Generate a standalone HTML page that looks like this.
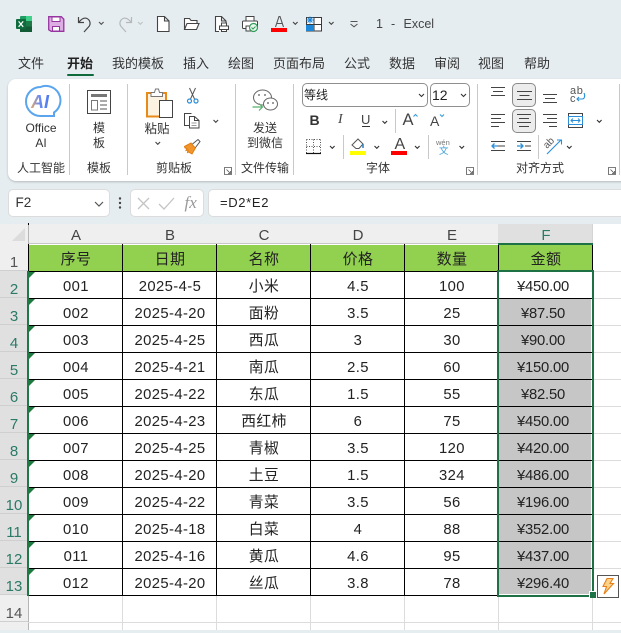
<!DOCTYPE html>
<html lang="zh"><head><meta charset="utf-8"><title>1 - Excel</title>
<style>
html,body{margin:0;padding:0}
body{width:621px;height:630px;overflow:hidden;position:relative;background:#e6edf1;font-family:"Liberation Sans","Noto Sans CJK SC",sans-serif;color:#222}
div,svg{position:absolute}
.t{white-space:nowrap;line-height:16px}
.c{text-align:center}
.tab{top:56px;font-size:13px;height:16px;line-height:16px;color:#333;white-space:nowrap}
.r{font-size:12px;color:#333}
.sep{width:1px;background:#c9c9c9}
#ribbon{left:8px;top:79px;width:640px;height:102px;background:#fff;border-radius:8px;box-shadow:0 1px 2px rgba(0,0,0,.22)}
.ch{top:224px;height:20px;line-height:23px;text-align:center;font-size:15px;color:#444;background:#efefef;border-right:1px solid #d4d4d4;box-sizing:border-box;width:95px;padding-left:2px}
.rh{left:0;width:28px;text-align:center;font-size:15px;color:#555;background:#efefef;border-bottom:1px solid #cfcfcf;box-sizing:border-box;height:27px;line-height:38px}
.rs{background:#e0e0e0;color:#2a7a66;left:0;width:28px}
.gv{top:244px;width:1px;height:386px;background:#dcdcdc}
.gh{left:28px;width:593px;height:1px;background:#dcdcdc}
.row{left:28px;width:564px;height:27px}
.row span{position:absolute;top:0;width:94px;text-align:center;font-size:14.8px;line-height:32px;color:#222;letter-spacing:.4px;white-space:nowrap}
.row span:nth-child(1){left:1px}.row span:nth-child(2){left:95px}.row span:nth-child(3){left:189px}.row span:nth-child(4){left:283px}.row span:nth-child(5){left:377px}.row span:nth-child(6){left:468px;letter-spacing:-.2px}
.hd span{line-height:31px;letter-spacing:.4px;font-size:15px}
.row.hd span:nth-child(6){left:471px;letter-spacing:.4px}
.gr{width:0;height:0;left:29px;border-top:6px solid #1e7a3c;border-right:6px solid transparent}
</style></head><body>

<!-- title bar icons -->
<svg style="left:0;top:0" width="621" height="50" viewBox="0 0 621 50" fill="none">
<rect x="20" y="16" width="12" height="16" rx="1" fill="#1f9d62"/><rect x="26" y="16" width="6" height="5" fill="#3fd08a"/><rect x="26" y="21" width="6" height="5.500" fill="#1d7a48"/><rect x="20" y="26.500" width="12" height="5.500" fill="#115c35"/>
<rect x="16" y="19" width="10" height="10" rx="1" fill="#0e6c3c"/>
<path d="M18.600 21.400l4.600 5.400M23.200 21.400l-4.600 5.400" stroke="#fff" stroke-width="1.200"/>
<path d="M48.700 16.700h12.600l2.500 2.500v12.100h-12.600l-2.500-1.500z" fill="#dcaee4" stroke="#96359f" stroke-width="1.300"/>
<rect x="52" y="17" width="8" height="4.500" fill="#fff" stroke="#96359f" stroke-width="1"/><rect x="52.500" y="26.500" width="7" height="4.500" fill="#fff" stroke="#96359f" stroke-width="1"/>
<path d="M78.500 17v5.500h5.500M79 22c3-3.500 6-4.500 8-3.500 3.500 1.800 4 6 1.500 8.500l-4.500 5" stroke="#444" stroke-width="1.200"/>
<path d="M99 22l2.300 2.300 2.300-2.300" stroke="#555" stroke-width="1.200"/>
<path d="M131.500 17v5.500h-5.500M131 22c-3-3.500-6-4.500-8-3.500-3.500 1.800-4 6-1.500 8.500l4.500 5" stroke="#b4b8ba" stroke-width="1.200"/>
<path d="M138 22l2.300 2.300 2.300-2.300" stroke="#c0c4c6" stroke-width="1.200"/>
<path d="M157.500 16.500h7l4.500 4.500v10.500h-11.500zM164.500 16.500v4.500h4.500" fill="#fff" stroke="#444" stroke-width="1.100"/>
<path d="M184.500 29.500v-11h5l1.500 2h6v3M184.500 29.500l2.500-6h12l-2.500 6z" stroke="#444" stroke-width="1.100" fill="#fff"/>
<path d="M219 31.500h-3.500v-15h6l4.500 4.500v3M221.500 16.500v4.500h4.500" stroke="#444" stroke-width="1.100" fill="#fff"/>
<rect x="219.500" y="26" width="9" height="3.500" fill="#fff" stroke="#444"/><rect x="221.500" y="23" width="5" height="3" fill="#fff" stroke="#444"/><rect x="221.500" y="29.500" width="5" height="2" fill="#fff" stroke="#444"/>
<rect x="246" y="16.500" width="8" height="4.500" fill="#fff" stroke="#444"/><rect x="242.500" y="21" width="15" height="7.500" rx="1" fill="#fff" stroke="#444"/><rect x="246" y="26" width="5" height="5" fill="#fff" stroke="#444"/>
<circle cx="253.500" cy="27.500" r="4" fill="#eaf6ee" stroke="#2f9e58" stroke-width="1.200"/><path d="M251.500 27.500l1.500 1.500 2.500-2.500" stroke="#2f9e58"/>
<path d="M275.500 27l3.500-10.500h1l3.500 10.500M276.800 23.500h5.400" stroke="#555" stroke-width="1.100"/><rect x="271" y="28" width="16" height="4" fill="#f00"/>
<path d="M293 22l2.300 2.300 2.300-2.300" stroke="#444" stroke-width="1.100"/>
<rect x="306.500" y="17.500" width="15" height="13.500" fill="#fff" stroke="#3a3a3a"/><path d="M306 24.500h16M314 17v14" stroke="#3a3a3a"/><rect x="306" y="25" width="8" height="6" fill="#1e88d8"/><path d="M310 16.500v7M306.500 20h7M307.500 17.500l5 5M312.500 17.500l-5 5" stroke="#1e88d8"/>
<path d="M329 22l2.300 2.300 2.300-2.300" stroke="#444" stroke-width="1.100"/>
<path d="M350.500 21.500h7M350.500 24l3.500 2.800 3.500-2.800" stroke="#555"/>
</svg>
<div class="t" style="left:376px;top:16px;font-size:12.500px;color:#444">1</div>
<div class="t" style="left:391px;top:16px;font-size:12.500px;color:#444">-</div>
<div class="t" style="left:403.500px;top:16px;font-size:12.500px;color:#444">Excel</div>

<!-- tabs -->
<div class="tab" style="left:18px">文件</div>
<div class="tab" style="left:67px;font-weight:700;color:#222">开始</div>
<div style="left:67px;top:74px;width:27px;height:2px;background:#0f6b3c;border-radius:1px"></div>
<div class="tab" style="left:112px">我的模板</div>
<div class="tab" style="left:183px">插入</div>
<div class="tab" style="left:228px">绘图</div>
<div class="tab" style="left:273px">页面布局</div>
<div class="tab" style="left:344px">公式</div>
<div class="tab" style="left:389px">数据</div>
<div class="tab" style="left:434px">审阅</div>
<div class="tab" style="left:478px">视图</div>
<div class="tab" style="left:524px">帮助</div>

<!-- ribbon -->
<div id="ribbon"></div>
<div class="sep" style="left:69px;top:84px;height:91px"></div>
<div class="sep" style="left:127px;top:84px;height:91px"></div>
<div class="sep" style="left:235px;top:84px;height:91px"></div>
<div class="sep" style="left:293px;top:84px;height:91px"></div>
<div class="sep" style="left:477px;top:84px;height:91px"></div>
<div class="sep" style="left:619px;top:84px;height:91px"></div>
<div class="sep" style="left:395px;top:109px;height:24px"></div>
<div class="sep" style="left:343px;top:135px;height:24px"></div>
<div class="sep" style="left:428px;top:135px;height:24px"></div>
<div class="sep" style="left:538px;top:135px;height:24px"></div>

<div class="t c r" style="left:11px;top:120px;width:60px">Office</div>
<div class="t c r" style="left:11px;top:135px;width:60px">AI</div>
<div class="t c r" style="left:8px;top:160px;width:66px">人工智能</div>
<div class="t c r" style="left:69px;top:120px;width:60px">模</div>
<div class="t c r" style="left:69px;top:135px;width:60px">板</div>
<div class="t c r" style="left:69px;top:160px;width:60px">模板</div>
<div class="t c r" style="left:127px;top:121px;width:60px;font-size:12.500px">粘贴</div>
<div class="t c r" style="left:144px;top:160px;width:60px">剪贴板</div>
<div class="t c r" style="left:235px;top:120px;width:60px">发送</div>
<div class="t c r" style="left:235px;top:135px;width:60px">到微信</div>
<div class="t c r" style="left:235px;top:160px;width:60px">文件传输</div>
<div class="t c r" style="left:348px;top:160px;width:60px">字体</div>
<div class="t c r" style="left:505px;top:160px;width:70px">对齐方式</div>

<!-- font selectors -->
<div style="left:302px;top:83px;width:126px;height:24px;box-sizing:border-box;border:1px solid #8f8f8f;border-radius:5px;background:#fff"></div>
<div style="left:430px;top:83px;width:40px;height:24px;box-sizing:border-box;border:1px solid #8f8f8f;border-radius:5px;background:#fff"></div>
<div class="t" style="left:304px;top:87px;font-size:12px">等线</div>
<div class="t" style="left:432px;top:87px;font-size:14px">12</div>
<!-- highlighted alignment buttons -->
<div style="left:512px;top:83px;width:24px;height:24px;box-sizing:border-box;border:1px solid #8a8a8a;border-radius:5px;background:#ececec"></div>
<div style="left:512px;top:109px;width:24px;height:24px;box-sizing:border-box;border:1px solid #8a8a8a;border-radius:5px;background:#ececec"></div>

<div class="t" style="left:309.500px;top:112px;font-size:14px;font-weight:700;color:#333">B</div>
<div class="t" style="left:338px;top:112px;font-size:14px;font-style:italic;font-family:'Liberation Serif',serif;color:#444">I</div>
<div class="t" style="left:361px;top:112px;font-size:13px;color:#444">U</div>
<div class="t" style="left:402.500px;top:112px;font-size:16.500px;color:#444">A</div>
<div class="t" style="left:430px;top:113px;font-size:14px;color:#444">A</div>
<div class="t" style="left:394.500px;top:137px;font-size:16px;color:#444">A</div>
<div class="t" style="left:436px;top:139px;font-size:7.500px;line-height:8px;color:#777">wén</div>
<div class="t" style="left:439px;top:146px;font-size:9.500px;line-height:11px;color:#3b9fd8">文</div>
<div class="t" style="left:570px;top:87px;font-size:11px;line-height:9px;letter-spacing:.6px;color:#555">ab</div>
<div class="t" style="left:570px;top:95px;font-size:11px;line-height:9px;color:#555">c</div>

<svg style="left:0;top:80px" width="621" height="100" viewBox="0 80 621 100" fill="none">
<defs><linearGradient id="ai" x1="0" y1="0" x2="1" y2="0"><stop offset="0" stop-color="#f0ae5a"/><stop offset=".45" stop-color="#6d8cf0"/><stop offset="1" stop-color="#4a78f0"/></linearGradient></defs>
<!-- AI -->
<path d="M40.500 87a14.500 14.500 0 1 0 0 29h13.500v-3.500a14.500 14.500 0 0 0-13.500-25.500z" fill="#fff" stroke="#5aa5ee" stroke-width="2"/>
<text x="31" y="108" font-family="Liberation Sans" font-size="18" font-weight="700" font-style="italic" fill="url(#ai)">AI</text>
<!-- template -->
<rect x="87.500" y="90.500" width="23" height="23" fill="#fff" stroke="#444" stroke-width="1"/>
<rect x="91" y="94" width="16" height="3" fill="#777"/><rect x="91.500" y="100.500" width="6" height="9.500" fill="#fff" stroke="#777"/><path d="M100 101h7M100 105h7M100 109h7" stroke="#777" stroke-width="1.300"/>
<!-- paste -->
<rect x="147" y="93" width="19" height="23.500" fill="#fdf3e3" stroke="#e88a1a" stroke-width="2"/>
<path d="M151 96.500v-4h3.500l1-3.500h3l1 3.500h3v4z" fill="#fff" stroke="#777"/>
<rect x="159.500" y="100.500" width="13" height="17" fill="#fff" stroke="#444"/>
<!-- scissors -->
<path d="M189.500 88l5 11M195.500 88l-5 11" stroke="#555"/><circle cx="189.500" cy="101" r="2" stroke="#2a8fd8" stroke-width="1.200"/><circle cx="196" cy="101" r="2" stroke="#2a8fd8" stroke-width="1.200"/>
<!-- copy -->
<path d="M189 125.500h-4.500v-12h7" stroke="#444"/><path d="M189.500 116.500h5l4.500 4v7.500h-9.500zM194.500 116.500v4h4.500" fill="#fff" stroke="#444"/><path d="M191.500 123h5M191.500 125.500h5" stroke="#777" stroke-width=".8"/>
<path d="M213.500 120l2.300 2.300 2.300-2.300M155.500 142l2.300 2.300 2.300-2.300" stroke="#444" stroke-width="1.100"/>
<!-- brush -->
<path d="M184.500 146.500l6.500-3.500 4.500 5-3.500 6-3.500-2-1 .5.500-2.500-2 .5 1-2-2-.5z" fill="#f2962c" stroke="#e07d10"/><path d="M192.500 144l5.500-4.500 2 2-4.500 6" fill="#fff" stroke="#555"/>
<!-- wechat -->
<ellipse cx="262.500" cy="97.500" rx="9" ry="7.500" fill="#fff" stroke="#666"/><ellipse cx="270.500" cy="104" rx="7" ry="6" fill="#fff" stroke="#666"/>
<circle cx="259" cy="95" r=".9" fill="#555"/><circle cx="265" cy="95" r=".9" fill="#555"/><circle cx="268" cy="103" r=".9" fill="#555"/><circle cx="273" cy="103" r=".9" fill="#555"/>
<path d="M252.500 107h10M259 103.500l3.500 3.500-3.500 3.500" stroke="#58b06e" stroke-width="1.200"/>
<!-- chevrons font -->
<path d="M419 94l2.500 2.500 2.500-2.500M461 94l2.500 2.500 2.500-2.500M382.500 121l2.300 2.300 2.300-2.300M330 146l2.300 2.300 2.300-2.300M374.500 146l2.300 2.300 2.300-2.300M415 146l2.300 2.300 2.300-2.300M459.500 146l2.300 2.300 2.300-2.300M597 120l2.300 2.300 2.300-2.300M567 146l2.300 2.300 2.300-2.300" stroke="#333" stroke-width="1.100"/>
<path d="M362 126.500h8" stroke="#333"/>
<!-- grow/shrink carets -->
<path d="M413.500 116.500l2-2 2 2" stroke="#3a9ad9" stroke-width="1.100"/><path d="M440 114.500l2 2 2-2" stroke="#3a9ad9" stroke-width="1.100"/>
<!-- borders -->
<path d="M306.500 139.500h14M306.500 146.500h14M313.500 139.500v14M306.500 139.500v14M320.500 139.500v14" stroke="#555" stroke-dasharray="1 1.500"/><path d="M306 153.500h15" stroke="#111" stroke-width="1.200"/>
<!-- fill bucket -->
<path d="M352 145l6-6 5 5-4 4.500h-3z" fill="#fff" stroke="#555"/><path d="M363 144v4" stroke="#2a7fc8" stroke-width="1.500"/>
<rect x="350" y="151" width="16" height="4" fill="#ff0"/>
<rect x="391" y="151" width="16" height="4" fill="#f00"/>
<!-- align lines -->
<g stroke="#444" stroke-width="1.100">
<path d="M491 87.500h14M493 91.500h10M491 95.500h14"/>
<path d="M517 91.500h15M519.500 95.500h10M517 99.500h15"/>
<path d="M543 94.500h14M545 98.500h10M543 102.500h14"/>
<path d="M491 114.500h14M491 118.500h10M491 122.500h14M491 126.500h8"/>
<path d="M517 114.500h14M519 118.500h10M517 122.500h14M519 126.500h10"/>
<path d="M543 114.500h14M547 118.500h10M543 122.500h14M549 126.500h8"/>
<path d="M491 141.500h14M498 146h7M491 150.500h14"/>
<path d="M517 141.500h14M525 146h6M517 150.500h14"/>
</g>
<path d="M498 146h-6M494.500 143.500l-2.500 2.500 2.500 2.500M517 146h6M520.500 143.500l2.500 2.500-2.500 2.500" stroke="#2a8fd8" stroke-width="1.300"/>
<!-- wrap arrow -->
<path d="M584 93c1.500 3 .5 6-2 6h-5M579 97l-2 2 2 2" stroke="#2a8fd8" stroke-width="1.100"/>
<!-- merge -->
<rect x="568.500" y="113.500" width="14" height="14" fill="#fff" stroke="#444"/><rect x="568.500" y="116.500" width="14" height="8" fill="#fff" stroke="#2a8fd8"/><path d="M571 120.500h9M573 118.500l-2 2 2 2M578 118.500l2 2-2 2" stroke="#2a8fd8"/>
<!-- orientation -->
<path d="M547 154l14-14M557 140h4.500v4.500" stroke="#2a8fd8" stroke-width="1.100"/>
<text x="0" y="0" transform="translate(547 149) rotate(-45)" font-family="Liberation Sans" font-size="10" fill="#555">ab</text>
<!-- launchers -->
<path d="M224.500 167.500h7v7h-7zM226.500 169.500l4 4M230.500 171v2.500h-2.500" stroke="#555" stroke-width=".8"/>
<path d="M466.500 167.500h7v7h-7zM468.500 169.500l4 4M472.500 171v2.500h-2.500" stroke="#555" stroke-width=".8"/>
<path d="M608.500 167.500h7v7h-7zM610.500 169.500l4 4M614.500 171v2.500h-2.500" stroke="#555" stroke-width=".8"/>
</svg>

<!-- formula bar -->
<div style="left:8px;top:189px;width:102px;height:28px;box-sizing:border-box;border:1px solid #dcdcdc;border-radius:5px;background:#fff"></div>
<div class="t" style="left:15.500px;top:195px;font-size:13.500px;color:#333">F2</div>
<div style="left:130px;top:189px;width:74px;height:28px;box-sizing:border-box;border:1px solid #dcdcdc;border-radius:5px;background:#fff"></div>
<div style="left:208px;top:189px;width:420px;height:28px;box-sizing:border-box;border:1px solid #dcdcdc;border-radius:5px;background:#fff"></div>
<div class="t" style="left:220px;top:195px;font-size:13px;letter-spacing:.65px;color:#222">=D2*E2</div>
<div class="t" style="left:184.500px;top:195px;font-size:17px;font-style:italic;font-family:'Liberation Serif',serif;color:#999">fx</div>
<svg style="left:0;top:185px" width="210" height="35" viewBox="0 185 210 35" fill="none">
<path d="M95 202l4 4 4-4" stroke="#555" stroke-width="1.200"/>
<circle cx="120" cy="198.500" r="1.200" fill="#444"/><circle cx="120" cy="203" r="1.200" fill="#444"/><circle cx="120" cy="207.500" r="1.200" fill="#444"/>
<path d="M138 198l11 11M149 198l-11 11" stroke="#c4c4c4" stroke-width="1.300"/>
<path d="M159 204l5 5 10-11" stroke="#c4c4c4" stroke-width="1.300"/>
</svg>

<!-- grid base -->
<div style="left:0;top:224px;width:621px;height:406px;background:#fff"></div>
<div style="left:0;top:224px;width:28px;height:20px;background:#efefef"></div>
<svg style="left:12px;top:228px" width="14" height="14"><path d="M13 0v13H0z" fill="#dcdcdc"/></svg>
<div style="left:592px;top:224px;width:29px;height:20px;background:#fff"></div>

<div class="ch" style="left:28px">A</div>
<div class="ch" style="left:122px">B</div>
<div class="ch" style="left:216px">C</div>
<div class="ch" style="left:310px">D</div>
<div class="ch" style="left:404px">E</div>
<div class="ch" style="left:498px;background:#e0e0e0;color:#2a7a66">F</div>
<div style="left:28px;top:243px;width:470px;height:1px;background:#c6c6c6"></div>

<div class="rh" style="top:244px;height:27px">1</div>
<div class="rh rs" style="top:271px">2</div>
<div class="rh rs" style="top:298px">3</div>
<div class="rh rs" style="top:325px">4</div>
<div class="rh rs" style="top:352px">5</div>
<div class="rh rs" style="top:379px">6</div>
<div class="rh rs" style="top:406px">7</div>
<div class="rh rs" style="top:433px">8</div>
<div class="rh rs" style="top:460px">9</div>
<div class="rh rs" style="top:487px">10</div>
<div class="rh rs" style="top:514px">11</div>
<div class="rh rs" style="top:541px">12</div>
<div class="rh rs" style="top:568px">13</div>
<div class="rh" style="top:595px">14</div>
<div class="rh" style="top:622px;height:8px;border-bottom:0"></div>
<div style="left:28px;top:224px;width:1px;height:406px;background:#b5b5b5"></div>
<div style="left:28px;top:223px;width:1px;height:2px;background:#000"></div>

<!-- light gridlines -->
<div class="gv" style="left:122px"></div><div class="gv" style="left:216px"></div><div class="gv" style="left:310px"></div><div class="gv" style="left:404px"></div><div class="gv" style="left:498px"></div><div class="gv" style="left:592px"></div>
<div class="gh" style="top:622px"></div>
<div class="gh" style="left:592px;width:29px;top:271px"></div><div class="gh" style="left:592px;width:29px;top:298px"></div><div class="gh" style="left:592px;width:29px;top:325px"></div><div class="gh" style="left:592px;width:29px;top:352px"></div><div class="gh" style="left:592px;width:29px;top:379px"></div><div class="gh" style="left:592px;width:29px;top:406px"></div><div class="gh" style="left:592px;width:29px;top:433px"></div><div class="gh" style="left:592px;width:29px;top:460px"></div><div class="gh" style="left:592px;width:29px;top:487px"></div><div class="gh" style="left:592px;width:29px;top:514px"></div><div class="gh" style="left:592px;width:29px;top:541px"></div><div class="gh" style="left:592px;width:29px;top:568px"></div>

<!-- fills -->
<div style="left:29px;top:245px;width:563px;height:26px;background:#92d050"></div>
<div style="left:499px;top:298px;width:92px;height:296px;background:#c6c6c6"></div>

<!-- data -->
<div class="row hd" style="top:244px"><span>序号</span><span>日期</span><span>名称</span><span>价格</span><span>数量</span><span>金额</span></div>
<div class="row" style="top:271px"><span>001</span><span>2025-4-5</span><span>小米</span><span>4.5</span><span>100</span><span>¥450.00</span></div>
<div class="row" style="top:298px"><span>002</span><span>2025-4-20</span><span>面粉</span><span>3.5</span><span>25</span><span>¥87.50</span></div>
<div class="row" style="top:325px"><span>003</span><span>2025-4-25</span><span>西瓜</span><span>3</span><span>30</span><span>¥90.00</span></div>
<div class="row" style="top:352px"><span>004</span><span>2025-4-21</span><span>南瓜</span><span>2.5</span><span>60</span><span>¥150.00</span></div>
<div class="row" style="top:379px"><span>005</span><span>2025-4-22</span><span>东瓜</span><span>1.5</span><span>55</span><span>¥82.50</span></div>
<div class="row" style="top:406px"><span>006</span><span>2025-4-23</span><span>西红柿</span><span>6</span><span>75</span><span>¥450.00</span></div>
<div class="row" style="top:433px"><span>007</span><span>2025-4-25</span><span>青椒</span><span>3.5</span><span>120</span><span>¥420.00</span></div>
<div class="row" style="top:460px"><span>008</span><span>2025-4-20</span><span>土豆</span><span>1.5</span><span>324</span><span>¥486.00</span></div>
<div class="row" style="top:487px"><span>009</span><span>2025-4-22</span><span>青菜</span><span>3.5</span><span>56</span><span>¥196.00</span></div>
<div class="row" style="top:514px"><span>010</span><span>2025-4-18</span><span>白菜</span><span>4</span><span>88</span><span>¥352.00</span></div>
<div class="row" style="top:541px"><span>011</span><span>2025-4-16</span><span>黄瓜</span><span>4.6</span><span>95</span><span>¥437.00</span></div>
<div class="row" style="top:568px"><span>012</span><span>2025-4-20</span><span>丝瓜</span><span>3.8</span><span>78</span><span>¥296.40</span></div>

<!-- black borders -->
<svg style="left:0;top:240px" width="621" height="390" viewBox="0 240 621 390" fill="none">
<path d="M28.500 244V596M122.500 244V596M216.500 244V596M310.500 244V596M404.500 244V596M498.500 244V596M592.500 244V596" stroke="#000" stroke-width="1"/>
<path d="M28 271.500H593M28 298.500H593M28 325.500H593M28 352.500H593M28 379.500H593M28 406.500H593M28 433.500H593M28 460.500H593M28 487.500H593M28 514.500H593M28 541.500H593M28 568.500H593M28 595.500H593" stroke="#000" stroke-width="1"/>
</svg>

<!-- error triangles -->
<div class="gr" style="top:272px"></div><div class="gr" style="top:299px"></div><div class="gr" style="top:326px"></div><div class="gr" style="top:353px"></div><div class="gr" style="top:380px"></div><div class="gr" style="top:407px"></div><div class="gr" style="top:434px"></div><div class="gr" style="top:461px"></div><div class="gr" style="top:488px"></div><div class="gr" style="top:515px"></div><div class="gr" style="top:542px"></div><div class="gr" style="top:569px"></div>
<div style="left:27px;top:271px;width:2px;height:325px;background:#1e7a45"></div>

<!-- selection -->
<div style="left:498px;top:243px;width:95px;height:2px;background:#1e7145"></div>
<div style="left:497px;top:270px;width:97px;height:327px;box-sizing:border-box;border:2px solid #1e7145"></div>
<div style="left:590px;top:592px;width:6px;height:6px;background:#1e7145;box-shadow:-1px -1px 0 #fff"></div>

<!-- quick analysis -->
<div style="left:597px;top:575px;width:22px;height:23px;box-sizing:border-box;border:1px solid #555;background:#fff"></div>
<svg style="left:598px;top:576px" width="20" height="20" viewBox="0 0 20 20" fill="none"><path d="M9 2.500h6l-3 5h3.500L6 18l2.500-7.500H5z" fill="#fbd28a" stroke="#e8801a" stroke-width="1.100"/></svg>

</body></html>
